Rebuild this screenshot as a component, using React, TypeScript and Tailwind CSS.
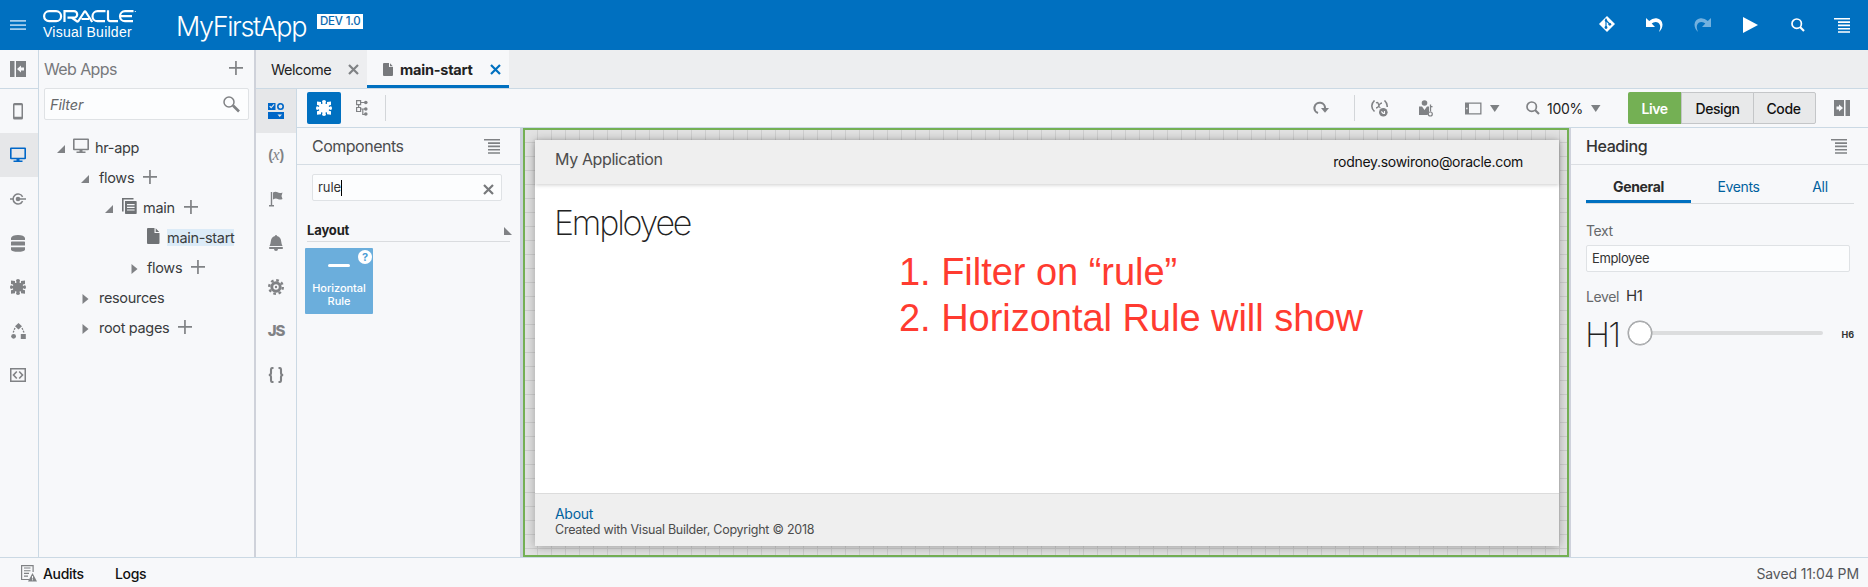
import type { ReactNode } from 'react';

type IconProps = { className?: string };

const Svg = ({ w = 16, h = 16, className = '', children }: { w?: number; h?: number; className?: string; children: ReactNode }) => (
  <svg width={w} height={h} viewBox={`0 0 ${w} ${h}`} className={`shrink-0 ${className}`} fill="currentColor">
    {children}
  </svg>
);

const Puzzle = ({ className }: IconProps) => (
  <Svg className={className}>
    <path d="M1 1.500L5 2V3.700Q5.700 4.300 6.600 3.500L6 1.600Q6 0 8 0Q10 0 10 1.600L9.400 3.500Q10.300 4.300 11 3.700V2L15 1.500V5L13 5.500Q12.400 6.300 13.200 7L14.800 6.300Q16 6.500 16 8.200Q16 9.900 14.800 10L13.200 9.300Q12.400 9.900 13 10.700L15 11.200V14.700L11 14.200V12.500Q10.300 11.900 9.400 12.700L10 14.600Q10 16 8 16Q6 16 6 14.600L6.600 12.700Q5.700 11.900 5 12.500V14.200L1 14.700V11.200L3 10.700Q3.600 9.900 2.800 9.300L1.200 10Q0 9.900 0 8.200Q0 6.500 1.200 6.300L2.800 7Q3.600 6.300 3 5.500L1 5Z" />
  </Svg>
);

const Plus = () => (
  <Svg w={14} h={14} className="text-[#808285]">
    <path d="M6.100 0h1.700v14H6.100zM0 6.100h14v1.700H0z" />
  </Svg>
);

const Monitor = ({ className }: IconProps) => (
  <Svg className={className}>
    <path fillRule="evenodd" d="M1 .5h14a1 1 0 0 1 1 1v9.800a1 1 0 0 1-1 1H1a1 1 0 0 1-1-1V1.500a1 1 0 0 1 1-1zm.6 1.600v8.600h12.800V2.100z" />
    <path d="M6.500 12h3v1.500h3V15h-9v-1.500h3z" />
  </Svg>
);

const Doc = ({ className }: IconProps) => (
  <Svg w={13} h={16} className={className}>
    <path d="M1 0h6.500v5H12.500v10a1 1 0 0 1-1 1H1a1 1 0 0 1-1-1V1a1 1 0 0 1 1-1zM8.700 0.300L12.200 4H8.700z" />
  </Svg>
);

const Pages = () => (
  <Svg w={15} h={17} className="text-[#6f7275]">
    <path d="M0 0h11.500v1.600H1.600V13.500H0z" />
    <path fillRule="evenodd" d="M3 3h11a.7.7 0 0 1 .7.7V15.300a.7.700 0 0 1-.7.7H3.700a.7.700 0 0 1-.7-.7zm2 3v1.200h7.600V6zm0 2.700v1.200h7.600V8.700zm0 2.700v1.200h7.600v-1.200z" />
  </Svg>
);

const Cross = ({ className }: IconProps) => (
  <Svg w={11} h={11} className={className}>
    <path d="M1 1l9 9M10 1l-9 9" stroke="currentColor" strokeWidth="2.200" />
  </Svg>
);

const Menu = ({ className }: IconProps) => (
  <Svg w={16} h={15} className={className}>
    <path d="M0 0h16v1.600H0zM4 3.300h12v1.600H4zM4 6.600h12v1.600H4zM4 9.900h12v1.600H4zM4 13.200h12v1.600H4z" />
  </Svg>
);

const Magnifier = ({ className }: IconProps) => (
  <Svg w={14} h={14} className={className}>
    <circle cx="5.700" cy="5.700" r="4.700" fill="none" stroke="currentColor" strokeWidth="1.700" />
    <path d="M9 9l4 4" stroke="currentColor" strokeWidth="2.100" />
  </Svg>
);

const Open = () => (
  <Svg w={8} h={8} className="mt-[1px] text-[#808285]">
    <path d="M8 0v8H0z" />
  </Svg>
);
const Closed = () => (
  <Svg w={7} h={10} className="mt-[1px] text-[#808285]">
    <path d="M.5 0L6.500 5L.5 10z" />
  </Svg>
);
const Caret = () => (
  <Svg w={10} h={7} className="text-[#7d8083]">
    <path d="M0 0h9.500L4.750 7z" />
  </Svg>
);

const Rail = ({ children, active = false }: { children: ReactNode; active?: boolean }) => (
  <div className={`flex h-[44px] shrink-0 items-center justify-center ${active ? 'bg-[#e6e7e9] text-[#0067c8]' : 'text-[#808285]'}`}>{children}</div>
);

const Row = ({ pad, children }: { pad: string; children: ReactNode }) => <div className={`flex h-[30px] items-center ${pad}`}>{children}</div>;

function Header() {
  return (
    <header className="flex h-[50px] shrink-0 items-center bg-[#0070c0] text-white">
      <Svg w={16} h={10} className="ml-[10px] text-[#a5cdec]">
        <path d="M0 0h16v1.700H0zM0 4.200h16v1.700H0zM0 8.300h16V10H0z" />
      </Svg>
      <div className="ml-[17px] flex h-[50px] w-[133px] flex-col pt-[10px]">
        <svg width="94" height="13" viewBox="0 0 94 13" fill="none" stroke="currentColor" strokeWidth="2.200" aria-label="Oracle">
          <rect x="1.100" y="1.200" width="17" height="10" rx="5" />
          <path d="M21.500 12V1.200H31a3.100 3.100 0 0 1 0 6.400H24.500M28.500 7.600L35 12" />
          <path d="M34.800 12L41.200 2Q42 .7 42.800 2L49.200 12M38.500 9H46" />
          <path d="M62.500 1.200H54.500a5 5 0 0 0 0 10H62" />
          <path d="M65 .2V9a2.200 2.200 0 0 0 2.200 2.200H75" />
          <path d="M90.500 1.200H82a5 5 0 0 0 0 10H90M77.500 6.200H89" />
          <path d="M91.800 1.500h1" strokeWidth="1" />
        </svg>
        <span className="mt-[1px] font-['Liberation_Sans'] text-[14px] leading-[17px] tracking-[0.250px] whitespace-nowrap">Visual Builder</span>
      </div>
      <span className="w-[140px] pt-[3px] text-[27px] leading-[30px] font-light tracking-[-1.400px]">MyFirstApp</span>
      <span className="mb-[8px] ml-[1px] h-[15px] bg-white px-[3px] text-[11.500px] leading-[15px] font-medium tracking-[-0.200px] whitespace-nowrap text-[#0a69b0]">DEV 1.0</span>
      <div className="ml-auto flex items-center pr-[18px]">
        <Svg className="mb-[3px]">
          <path d="M8 0l8 8-8 8-8-8z" />
          <path d="M7 2.500v9M7 4.500L10.800 8" stroke="#0070c0" strokeWidth="1.200" />
          <circle cx="7" cy="11.500" r="1.400" fill="#0070c0" />
          <circle cx="10.800" cy="8.300" r="1.400" fill="#0070c0" />
          <circle cx="7" cy="4.500" r="1.200" fill="#0070c0" />
        </Svg>
        <Svg w={17} h={14} className="mb-[1px] ml-[31px]">
          <path d="M0 0l3.200 3Q6.500-.2 10.500.2 16 1 16.500 6.500 16.500 10.500 13 14 14.800 10 14 7.200 12.800 4 9.500 4 7.200 4.100 5.700 5.600L9 9H0z" />
        </Svg>
        <Svg w={17} h={14} className="mb-[1px] ml-[31px] text-[#73b1df]">
          <path d="M17 0l-3.200 3Q10.500-.2 6.500.2 1 1 .5 6.500.5 10.500 4 14 2.200 10 3 7.200 4.200 4 7.500 4 9.800 4.100 11.300 5.600L8 9h9z" />
        </Svg>
        <Svg w={15} h={16} className="mb-[1px] ml-[32px]">
          <path d="M0 0L15 8L0 16z" />
        </Svg>
        <Magnifier className="mb-[1px] ml-[33px]" />
        <Menu className="mt-[1px] ml-[29px]" />
      </div>
    </header>
  );
}

function LeftRail() {
  return (
    <nav className="flex w-[39px] shrink-0 flex-col border-r border-[#cbd9e4]">
      <div className="flex h-[39px] items-center justify-center border-b border-[#cbd9e4] pr-[2px] text-[#7d8083]">
        <Svg>
          <path fillRule="evenodd" d="M0 0h4.500v16H0zM6 0h10v16H6zM11 4.500L7 8l4 3.500V9.500h3v-3H11z" />
        </Svg>
      </div>
      <div className="flex flex-col [&>div]:pr-[2px]">
        <Rail>
          <Svg w={10} h={17}>
            <path fillRule="evenodd" d="M1.500 0h7A1.500 1.500 0 0 1 10 1.500v13.500A1.500 1.500 0 0 1 8.500 16.500h-7A1.500 1.500 0 0 1 0 15V1.500A1.500 1.500 0 0 1 1.500 0zM1.500 2.300v11.500h7V2.300z" />
          </Svg>
        </Rail>
        <Rail active>
          <Monitor />
        </Rail>
        <Rail>
          <Svg h={12}>
            <path d="M0 5.300h3v1.500H0zM8 5.300h8v1.500H8z" />
            <circle cx="8" cy="6" r="2.300" />
            <path d="M12.600 3.800A5 5 0 1 0 12.600 8.200" fill="none" stroke="currentColor" strokeWidth="1.500" />
          </Svg>
        </Rail>
        <Rail>
          <Svg w={14} h={17}>
            <path d="M0 5V3Q1 0 7 0t7 3v2zM.8 6.500h12.400a.8.800 0 0 1 .8.800V10.500H0V7.300a.8.800 0 0 1 .8-.8zM0 12.300h14v2.500Q13 16.800 7 16.800T0 14.800z" />
          </Svg>
        </Rail>
        <Rail>
          <Puzzle />
        </Rail>
        <Rail>
          <Svg w={15} h={16}>
            <path d="M7.500 0l3.500 3.200-3.500 3.200L4 3.200zM9.800 11h5v5h-5z" />
            <circle cx="2.600" cy="13.300" r="2.400" />
            <path d="M4 5L2.200 9.500M11 5l2 4.500" stroke="currentColor" strokeWidth="1.300" strokeDasharray="2 1" />
          </Svg>
        </Rail>
        <Rail>
          <Svg h={14}>
            <rect x=".75" y=".75" width="14.500" height="12.500" fill="none" stroke="currentColor" strokeWidth="1.500" />
            <path d="M6.800 3.500L3.500 7l3.300 3.500M9.200 3.500L12.500 7l-3.300 3.500" fill="none" stroke="currentColor" strokeWidth="1.600" />
          </Svg>
        </Rail>
      </div>
    </nav>
  );
}

function WebApps() {
  return (
    <aside className="w-[215px] shrink-0 text-[#3a3c3e]">
      <div className="flex h-[38px] items-center pr-[11px] pl-[5px]">
        <span className="text-[16px] tracking-[-0.600px] text-[#77797c]">Web Apps</span>
        <div className="mb-[2px] ml-auto"><Plus /></div>
      </div>
      <div className="mr-[5px] ml-[5px] flex h-[32px] items-center rounded-[2px] border border-[#dfe2e5] bg-[#fcfdfe] pr-[8px] pl-[5px]">
        <span className="mt-[2px] text-[14.500px] tracking-[-0.150px] text-[#66686b] italic">Filter</span>
        <Svg w={17} h={17} className="ml-auto text-[#808285]">
          <circle cx="6" cy="6" r="5" fill="none" stroke="currentColor" strokeWidth="1.500" />
          <path d="M10 9.500L16 15.500" stroke="currentColor" strokeWidth="2.600" />
        </Svg>
      </div>
      <div className="mt-[13px] text-[14.500px] tracking-[-0.320px]">
        <Row pad="pl-[18px]">
          <Open />
          <Monitor className="mb-[4px] ml-[8px] text-[#808285]" />
          <span className="ml-[6px]">hr-app</span>
        </Row>
        <Row pad="pl-[42px]">
          <Open />
          <span className="ml-[10px] w-[44px]">flows</span>
          <div className="mb-[3px]"><Plus /></div>
        </Row>
        <Row pad="pl-[66px]">
          <Open />
          <div className="mb-[4px] ml-[9px]"><Pages /></div>
          <span className="ml-[6px] w-[41px]">main</span>
          <div className="mb-[3px]"><Plus /></div>
        </Row>
        <Row pad="pl-[108px]">
          <Doc className="mb-[4px] text-[#6f7275]" />
          <span className="mb-[1px] ml-[7px] bg-[#dcebf7] leading-[17px]">main-start</span>
        </Row>
        <Row pad="pl-[92px]">
          <Closed />
          <span className="ml-[9px] w-[44px]">flows</span>
          <div className="mb-[3px]"><Plus /></div>
        </Row>
        <Row pad="pl-[43px]">
          <Closed />
          <span className="ml-[10px]">resources</span>
        </Row>
        <Row pad="pl-[43px]">
          <Closed />
          <span className="ml-[10px] w-[79px] whitespace-nowrap">root pages</span>
          <div className="mb-[3px]"><Plus /></div>
        </Row>
      </div>
    </aside>
  );
}

function Tabs() {
  return (
    <div className="flex h-[39px] shrink-0 border-b border-[#cbd9e4] bg-[#edeef0]">
      <div className="flex w-[111px] items-center pl-[15px] text-[14.500px] tracking-[-0.500px] text-[#222]">
        <span className="mt-[2px] w-[77px]">Welcome</span>
        <Cross className="text-[#808285]" />
      </div>
      <div className="flex w-[142px] items-center border-b-[3px] border-[#0070c0] bg-[#f7f8fa] pl-[16px]">
        <Svg w={10} h={13} className="mt-[4px] text-[#77797c]">
          <path d="M1 0h5v4h4v8a1 1 0 0 1-1 1H1a1 1 0 0 1-1-1V1a1 1 0 0 1 1-1zM7 .2L9.800 3.200H7z" />
        </Svg>
        <span className="mt-[5px] ml-[7px] w-[90px] text-[14.500px] font-bold tracking-[-0.220px] whitespace-nowrap text-[#222]">main-start</span>
        <Cross className="mt-[3px] text-[#0070c0]" />
      </div>
    </div>
  );
}

function ToolRail() {
  return (
    <nav className="flex w-[41px] shrink-0 flex-col border-r border-[#cbd9e4]">
      <Rail active>
        <Svg>
          <path fillRule="evenodd" d="M0 0h7.500v7H0zM1.200 3.500l2 2 3.300-3.700-.8-.8L3.200 3.800 2.100 2.700zM0 9h16v7H0zM9.500 11.500h4.500l-2.250 2.500z" />
          <circle cx="12.500" cy="3.500" r="2.700" fill="none" stroke="currentColor" strokeWidth="1.600" />
        </Svg>
      </Rail>
      <Rail>
        <span className="font-['Liberation_Sans'] text-[14px] font-bold tracking-[-0.300px]">(<i className="font-['Liberation_Serif'] text-[16px] font-normal">x</i>)</span>
      </Rail>
      <Rail>
        <Svg w={14} h={16}>
          <path d="M0 14h5v1.600H0zM1.800 1h1.400v13H1.800zM4 1.500Q6.500 0 8.500 1.300T13.500 1.500L12.500 5 13.500 8Q11 9 8.800 8T4 8.500z" />
        </Svg>
      </Rail>
      <Rail>
        <Svg w={14} h={16}>
          <path d="M6 1a1 1 0 0 1 2 0Q12 2 12.300 7 12.500 9.500 13.500 11h-13Q1.500 9.500 1.700 7 2 2 6 1zM.2 12h13.600v2H9a2 2 0 0 1-4 0H.2z" />
        </Svg>
      </Rail>
      <Rail>
        <Svg>
          <circle cx="8" cy="8" r="6.800" fill="none" stroke="currentColor" strokeWidth="2.400" strokeDasharray="2.670 2.670" />
          <circle cx="8" cy="8" r="4.200" fill="none" stroke="currentColor" strokeWidth="2.900" />
          <circle cx="8" cy="8" r="1.200" />
        </Svg>
      </Rail>
      <Rail>
        <span className="text-[15px] font-extrabold tracking-[-1px]">JS</span>
      </Rail>
      <Rail>
        <Svg>
          <path d="M5.500 1H4.500Q3 1 3 2.500V6Q3 8 .8 8 3 8 3 10v3.500Q3 15 4.500 15h1M10.500 1h1Q13 1 13 2.500V6q0 2 2.200 2Q13 8 13 10v3.500q0 1.500-1.500 1.500h-1" fill="none" stroke="currentColor" strokeWidth="2.100" />
        </Svg>
      </Rail>
    </nav>
  );
}

function Toolbar() {
  return (
    <div className="flex h-[39px] shrink-0 items-center border-b border-[#cbd9e4] text-[#808285]">
      <div className="ml-[10px] flex h-[32px] w-[34px] items-center justify-center rounded-[2px] bg-[#0070c0] text-white">
        <Puzzle />
      </div>
      <Svg w={12} h={16} className="ml-[15px]">
        <path d="M.6.600h4v4h-4zM.6 7.500h4v4h-4zM2.600 4.600v3M4.600 2.500H9M4.600 9H10M6.800 9v5.500H10" fill="none" stroke="currentColor" strokeWidth="1.200" />
        <circle cx="9.800" cy="2.500" r="1.800" />
        <circle cx="9.800" cy="9" r="1.800" />
        <circle cx="9.800" cy="14" r="1.800" />
      </Svg>
      <div className="ml-[17px] h-[26px] w-px bg-[#d3d6d9]" />
      <div className="ml-auto flex h-full items-center pr-[18px]">
        <Svg w={16} h={14} className="mr-[25px]">
          <path d="M5 12A5.300 5.300 0 1 1 12 7.500" fill="none" stroke="currentColor" strokeWidth="2.100" />
          <path d="M8 7h8l-4 4.800z" />
        </Svg>
        <div className="h-[26px] w-px bg-[#d3d6d9]" />
        <Svg w={17} h={17} className="ml-[16px]">
          <path d="M3.500.500Q.800 3 .800 6t2.700 5.500M13.500.500Q16.200 3 16.200 6v1" fill="none" stroke="currentColor" strokeWidth="1.600" />
          <path d="M5 3q2-1.500 2.500 1.500t2 3.500M11 3Q9 3 8 5.500T5 8" fill="none" stroke="currentColor" strokeWidth="1.300" />
          <circle cx="12.300" cy="12.300" r="4.300" />
          <path d="M10.300 11.500l2.200 2M13.500 11v2.500h-2" stroke="#f7f8fa" strokeWidth="1.100" fill="none" />
        </Svg>
        <Svg w={14} h={17} className="ml-[31px]">
          <circle cx="5.500" cy="3" r="2.800" />
          <path d="M0 6.500h3l2.500 3.500L8 6.500h2v6L8.500 15H0z" />
          <path d="M11.500 4.500v7" stroke="currentColor" strokeWidth="1.300" />
          <path d="M11 6h2.500v1.300H11z" />
          <circle cx="11.300" cy="14" r="2" fill="#f7f8fa" stroke="currentColor" strokeWidth="1.200" />
        </Svg>
        <Svg w={17} h={13} className="ml-[32px]">
          <path fillRule="evenodd" d="M0 .5h16.500v12H0zM1.200 5.700v1.500h1.300V5.700zM4 1.700v9.600h11.200V1.700z" />
        </Svg>
        <div className="ml-[8px]"><Caret /></div>
        <Magnifier className="ml-[26px]" />
        <span className="ml-[7px] w-[44px] text-[14px] tracking-[-0.300px] text-[#222]">100%</span>
        <Caret />
        <div className="ml-[27px] flex h-[32px] items-stretch text-[14px] tracking-[-0.400px] text-[#111]">
          <div className="flex w-[53px] items-center justify-center rounded-l-[2px] bg-[#74b054] font-semibold text-white">Live</div>
          <div className="flex w-[73px] items-center justify-center border border-[#c4c6c8] bg-[#e8e9ea] font-medium">Design</div>
          <div className="-ml-px flex w-[63px] items-center justify-center rounded-r-[2px] border border-[#c4c6c8] bg-[#e8e9ea] pr-[2px] font-medium">Code</div>
        </div>
        <Svg className="ml-[18px] text-[#7d8083]">
          <path fillRule="evenodd" d="M11.500 0H16v16h-4.500zM0 0h10v16H0zM5 4.500L9 8l-4 3.500V9.500H2.500v-3H5z" />
        </Svg>
      </div>
    </div>
  );
}

function Components() {
  return (
    <aside className="w-[223px] shrink-0">
      <div className="flex h-[37px] items-center border-b border-[#d5dde4] pr-[20px] pl-[15px]">
        <span className="text-[16px] tracking-[-0.500px] text-[#4b4d4f]">Components</span>
        <Menu className="ml-auto text-[#808285]" />
      </div>
      <div className="mt-[9px] mr-[18px] ml-[15px] flex h-[27px] items-center rounded-[2px] border border-[#dfe2e5] bg-[#fcfdfe] pr-[7px] pl-[5px]">
        <span className="text-[13px] tracking-[-0.100px] text-[#333]">rule</span>
        <div className="h-[16px] w-px bg-black" />
        <Cross className="mt-[4px] ml-auto text-[#77797c]" />
      </div>
      <div className="mt-[19px] mr-[8px] ml-[10px] flex h-[21px] items-center text-[13px] font-bold tracking-[-0.150px] text-[#222]">
        Layout
        <Svg w={8} h={8} className="ml-auto text-[#808285]">
          <path d="M0 0v8h8z" />
        </Svg>
      </div>
      <div className="mr-[10px] ml-[10px] h-px bg-[#dadcdf]" />
      <div className="relative mt-[6px] ml-[8px] flex h-[66px] w-[68px] flex-col items-center rounded-[1px] bg-[#6baedc] pt-[16px] text-center text-[11px] leading-[13px] font-medium tracking-[-0.050px] text-white">
        <div className="mb-[15px] h-[3px] w-[22px] rounded-full bg-white" />
        <span>Horizontal</span>
        <span>Rule</span>
        <span className="absolute top-[2px] right-[1px] flex h-[14px] w-[14px] items-center justify-center rounded-full bg-white text-[11px] leading-none font-bold text-[#4d9fd6]">?</span>
      </div>
    </aside>
  );
}

function Canvas() {
  return (
    <main className="flex min-w-0 flex-1 border-r-[2px] border-l-[3px] border-r-[#cfd2dc] border-l-[#cbd1da]">
      <div className="min-w-0 flex-1 border-2 border-[#74b054] bg-[#e2e2e2] bg-[linear-gradient(to_right,#cfcfcf_1px,transparent_1px),linear-gradient(to_bottom,#cfcfcf_1px,transparent_1px)] bg-[length:14px_14px] bg-[position:12px_12px] pt-[10px] pr-[8px] pb-[9px] pl-[10px]">
        <div className="flex h-full flex-col bg-white shadow-[0_1px_10px_rgba(0,0,0,0.3)]">
          <div className="z-10 flex h-[44px] shrink-0 justify-between bg-[#efefef] pr-[36px] pl-[20px] shadow-[0_1px_4px_rgba(0,0,0,0.2)]">
            <span className="pt-[9px] text-[16px] leading-[20px] tracking-[-0.380px] text-[#4c4c4c]">My Application</span>
            <span className="pt-[12px] text-[14px] leading-[20px] tracking-[-0.290px] text-[#111]">rodney.sowirono@oracle.com</span>
          </div>
          <div className="relative flex-1">
            <h1 className="pt-[19px] pl-[19px] text-[34px] leading-[40px] font-extralight tracking-[-2.200px] text-[#222]">Employee</h1>
            <div className="absolute top-[65px] left-[364px] font-['Liberation_Sans'] text-[38px] leading-[46px] tracking-[-0.030px] whitespace-nowrap text-[#ff3b30]">
              <div>1. Filter on “rule”</div>
              <div>2. Horizontal Rule will show</div>
            </div>
          </div>
          <div className="h-[53px] shrink-0 border-t border-[#dcdcdc] bg-[#efefef] pt-[11px] pl-[20px]">
            <div className="text-[14px] leading-[17px] tracking-[-0.300px] text-[#00619e]">About</div>
            <div className="text-[12.500px] leading-[15px] tracking-[-0.250px] text-[#4c4c4c]">Created with Visual Builder, Copyright © 2018</div>
          </div>
        </div>
      </div>
    </main>
  );
}

function Properties() {
  return (
    <aside className="flex w-[297px] shrink-0 flex-col text-[14px]">
      <div className="flex h-[37px] items-center border-b border-[#dcdfe3] pr-[21px] pl-[15px]">
        <span className="text-[16px] font-medium tracking-[-0.400px] text-[#333]">Heading</span>
        <Menu className="ml-auto text-[#808285]" />
      </div>
      <div className="mr-[14px] ml-[15px] flex h-[39px] border-b border-[#d8dbde] tracking-[-0.350px] text-[#00619e]">
        <div className="flex w-[105px] items-center justify-center border-b-[3px] border-[#0070c0] pt-[7px] font-bold text-[#2b2b2b]">General</div>
        <div className="flex w-[95px] items-center justify-center pt-[4px]">Events</div>
        <div className="flex flex-1 items-center justify-center pt-[4px]">All</div>
      </div>
      <div className="mt-[16px] ml-[15px] flex h-[20px] items-center tracking-[-0.400px] text-[#66686b]">Text</div>
      <div className="mt-[5px] mr-[18px] ml-[15px] flex h-[27px] items-center rounded-[2px] border border-[#dfe2e5] bg-[#fcfdfe] pl-[5px] text-[13px] tracking-[-0.350px] text-[#333]">Employee</div>
      <div className="mt-[14px] ml-[15px] flex h-[20px] items-center tracking-[-0.400px] text-[#66686b]">
        <span className="w-[40px]">Level</span>
        <span className="text-[15px] text-[#333]">H1</span>
      </div>
      <div className="mt-[7px] flex h-[40px] items-center pr-[14px] pl-[14px]">
        <span className="mt-[3px] w-[40px] text-[34px] leading-[40px] font-extralight tracking-[-1.800px] text-[#222]">H1</span>
        <div className="relative ml-[2px] flex h-[24px] w-[196px] items-center">
          <div className="ml-[10px] h-[4px] flex-1 rounded-full bg-[#dcddde]" />
          <div className="absolute left-[1px] h-[24px] w-[24px] rounded-full border-[1.500px] border-[#a3a5a7] bg-white shadow-[0_0_0_0.500px_#a3a5a7]" />
        </div>
        <span className="mt-[4px] ml-auto text-[9px] font-bold text-[#333]">H6</span>
      </div>
    </aside>
  );
}

function StatusBar() {
  return (
    <footer className="flex h-[30px] shrink-0 items-center border-t border-[#cbd9e4] pt-[1px] pr-[9px] pl-[21px] text-[14px] tracking-[-0.350px] text-[#111]">
      <Svg w={16} h={17} className="text-[#808285]">
        <path d="M8 14.500H.6V.6h11.500V7" fill="none" stroke="currentColor" strokeWidth="1.200" />
        <path d="M3 3h6.500M3 5.700h6.500M3 8.400h5M3 11.100h4" stroke="currentColor" strokeWidth="1.100" />
        <path d="M11.500 8L16 16.500H7z" />
        <path d="M11.500 11v2.500M11.500 14.300v1" stroke="#f7f8fa" strokeWidth="1" />
      </Svg>
      <span className="ml-[6px] w-[72px] font-medium">Audits</span>
      <span className="font-medium">Logs</span>
      <span className="ml-auto tracking-[-0.080px] text-[#55575a]">Saved 11:04 PM</span>
    </footer>
  );
}

export default function App() {
  return (
    <div className="flex h-[587px] w-[1868px] flex-col overflow-hidden bg-[#f7f8fa] font-['Inter',sans-serif]">
      <Header />
      <div className="flex min-h-0 flex-1">
        <LeftRail />
        <WebApps />
        <div className="w-[2px] shrink-0 bg-[#cfd2da]" />
        <div className="flex min-w-0 flex-1 flex-col">
          <Tabs />
          <div className="flex min-h-0 flex-1">
            <ToolRail />
            <div className="flex min-w-0 flex-1 flex-col">
              <Toolbar />
              <div className="flex min-h-0 flex-1">
                <Components />
                <Canvas />
                <Properties />
              </div>
            </div>
          </div>
        </div>
      </div>
      <StatusBar />
    </div>
  );
}
